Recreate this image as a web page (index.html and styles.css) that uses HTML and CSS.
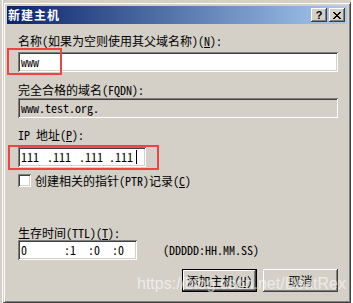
FILE: index.html
```html
<!DOCTYPE html>
<html lang="zh-CN">
<head>
<meta charset="utf-8">
<title>新建主机</title>
<link rel="stylesheet" href="styles.css">
</head>
<body>
<div class="dialog">
  <div class="titlebar">
    <span class="title">新建主机</span>
    <div class="caption-btns">
      <span class="cbtn help">?</span>
      <span class="cbtn close"><svg width="8" height="7" viewBox="0 0 8 7" shape-rendering="crispEdges"><path d="M0 0h2v1H0zM6 0h2v1H6zM1 1h2v1H1zM5 1h2v1H5zM2 2h4v1H2zM3 3h2v1H3zM2 4h4v1H2zM1 5h2v1H1zM5 5h2v1H5zM0 6h2v1H0zM6 6h2v1H6z" fill="#000"/></svg></span>
    </div>
  </div>
  <div class="client">
    <div class="lbl l-name">名称(如果为空则使用其父域名称)(<u>N</u>):</div>
    <div class="field f-name">
      <div class="edit e-name">www</div>
      <div class="mark m-name"></div>
    </div>
    <div class="lbl l-fqdn">完全合格的域名(FQDN):</div>
    <div class="edit readonly e-fqdn">www.test.org.</div>
    <div class="lbl l-ip">IP 地址(<u>P</u>):</div>
    <div class="field f-ip">
      <div class="edit e-ip">
        <span class="seg s1">111</span><span class="seg s2">.111</span><span class="seg s3">.111</span><span class="seg s4">.111</span><span class="caret"></span>
      </div>
      <div class="mark m-ip"></div>
    </div>
    <div class="check-row">
      <span class="checkbox"></span>
      <span class="check-text">创建相关的指针(PTR)记录(<u>C</u>)</span>
    </div>
    <div class="lbl l-ttl">生存时间(TTL)(<u>T</u>):</div>
    <div class="ttl-row">
      <div class="edit e-ttl">
        <span class="t t1">0</span><span class="t t2">:1</span><span class="t t3">:0</span><span class="t t4">:0</span>
      </div>
      <span class="ttl-hint">(DDDDD:HH.MM.SS)</span>
    </div>
    <div class="buttons">
      <span class="btn default">添加主机(<u>H</u>)</span>
      <span class="btn">取消</span>
    </div>
  </div>
</div>
<div class="watermark">https://blog.csdn.net/BeatRex</div>
</body>
</html>
```

FILE: styles.css
```css
html, body {
  margin: 0;
  padding: 0;
}

body {
  width: 353px;
  height: 303px;
  overflow: hidden;
  position: relative;
  background: linear-gradient(to right, #d4d0c8 0 2px, #ffffff 2px 3px, #d4d0c8 3px 351px, #ffffff 351px);
  font-family: "Noto Sans Mono CJK SC", "Noto Sans CJK SC", "Liberation Mono", monospace;
  font-size: 12px;
  color: #000;
}

.dialog {
  margin: 2px 0 0 3px;
  width: 348px;
  height: 301px;
  box-sizing: border-box;
  background: #d4d0c8;
  border: 1px solid;
  border-color: #d4d0c8 #404040 #404040 #d4d0c8;
  box-shadow: inset 1px 1px #ffffff, inset -1px -1px #808080;
  padding: 3px;
  display: flex;
  flex-direction: column;
}

.titlebar {
  height: 18px;
  flex: none;
  background: linear-gradient(to right, #0a246a, #a6caf0);
  display: flex;
  align-items: center;
  justify-content: space-between;
  padding: 0 2px 0 1px;
}

.title {
  color: #fff;
  font-weight: bold;
  font-size: 12px;
  letter-spacing: 1px;
  line-height: 12px;
  font-family: "Noto Sans CJK SC", sans-serif;
}

.caption-btns {
  display: flex;
  gap: 2px;
}

.cbtn {
  width: 16px;
  height: 14px;
  box-sizing: border-box;
  background: #d4d0c8;
  box-shadow: inset -1px -1px #404040, inset 1px 1px #ffffff, inset -2px -2px #808080, inset 2px 2px #d4d0c8;
  display: flex;
  align-items: center;
  justify-content: center;
}

.cbtn.help {
  font-family: "Liberation Sans", sans-serif;
  font-weight: bold;
  font-size: 11px;
  line-height: 11px;
  padding-top: 1px;
}

.cbtn.close svg {
  display: block;
  margin-top: 1px;
}

.client {
  flex: 1;
  padding: 0 9px 0 11px;
  display: flex;
  flex-direction: column;
  align-items: flex-start;
}

.lbl {
  line-height: 12px;
  height: 12px;
  white-space: nowrap;
}

u {
  text-underline-offset: 1px;
}

.l-name { margin-top: 11px; }
.l-fqdn { margin-top: 12px; }
.l-ip { margin-top: 11px; }
.l-ttl { margin-top: 40px; }

.field {
  position: relative;
}

.f-name { margin-top: 5px; }
.f-ip { margin-top: 6px; }

.edit {
  height: 20px;
  box-sizing: border-box;
  background: #fff;
  box-shadow: inset 1px 1px #808080, inset -1px -1px #ffffff, inset 2px 2px #404040, inset -2px -2px #d4d0c8;
  padding: 0 3px;
  display: flex;
  align-items: center;
  line-height: 12px;
  white-space: pre;
}

.e-name { width: 320px; }

.e-fqdn {
  width: 320px;
  margin-top: 2px;
}

.readonly {
  background: #d4d0c8;
}

.e-ip { width: 128px; }

.seg { display: inline-block; }
.s1 { width: 26px; }
.s2 { width: 32px; }
.s3 { width: 30px; }
.s4 { width: 24px; }

.caret {
  width: 1px;
  height: 14px;
  background: #000;
  margin-left: 3px;
}

.mark {
  position: absolute;
  box-sizing: border-box;
  border: 2px solid #ef4444;
}

.m-name {
  left: -11px;
  top: -4px;
  width: 55px;
  height: 27px;
}

.m-ip {
  left: -10px;
  top: -2px;
  width: 151px;
  height: 25px;
}

.check-row {
  margin-top: 7px;
  display: flex;
  align-items: center;
  gap: 4px;
  height: 13px;
}

.checkbox {
  width: 13px;
  height: 13px;
  box-sizing: border-box;
  background: #fff;
  box-shadow: inset 1px 1px #808080, inset -1px -1px #ffffff, inset 2px 2px #404040, inset -2px -2px #d4d0c8;
}

.check-text {
  line-height: 12px;
  white-space: nowrap;
}

.ttl-row {
  margin-top: 1px;
  display: flex;
  align-items: center;
}

.e-ttl { width: 119px; }

.t { display: inline-block; }
.t1 { width: 43px; }
.t2 { width: 24px; }
.t3 { width: 24px; }

.ttl-hint {
  margin-left: 26px;
  line-height: 12px;
  white-space: nowrap;
}

.buttons {
  margin-top: 9px;
  align-self: stretch;
  display: flex;
  justify-content: flex-end;
  gap: 6px;
}

.btn {
  width: 75px;
  height: 23px;
  box-sizing: border-box;
  background: #d4d0c8;
  box-shadow: inset -1px -1px #404040, inset 1px 1px #ffffff, inset -2px -2px #808080, inset 2px 2px #d4d0c8;
  display: flex;
  align-items: center;
  justify-content: center;
  line-height: 12px;
  white-space: nowrap;
}

.btn.default {
  border: 1px solid #000;
}

.watermark {
  position: absolute;
  left: 137px;
  top: 276px;
  font-family: "Liberation Sans", Arial, sans-serif;
  font-size: 16px;
  line-height: 16px;
  color: rgba(255, 255, 255, 0.6);
  white-space: nowrap;
}
```
